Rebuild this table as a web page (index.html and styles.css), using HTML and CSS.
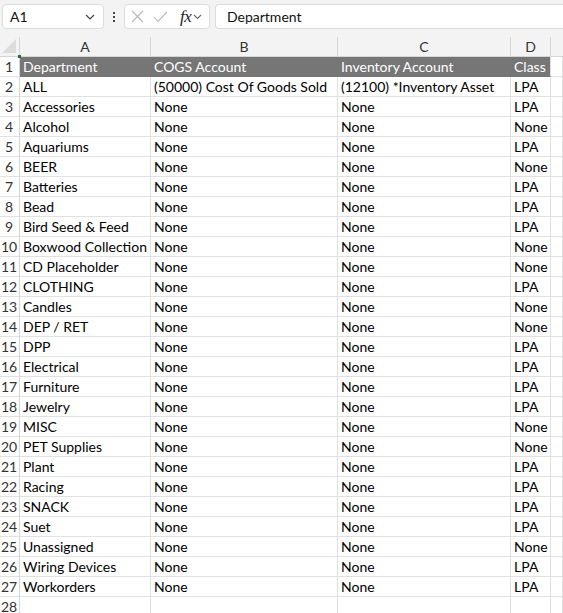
FILE: index.html
```html
<!DOCTYPE html>
<html>
<head>
<meta charset="utf-8">
<link rel="stylesheet" href="styles.css">
</head>
<body>
<div class="toolbar">
  <div class="namebox">
    <span class="nb-text">A1</span>
    <svg class="chev" width="10" height="6" viewBox="0 0 10 6"><path d="M1 1 L5 5 L9 1" fill="none" stroke="#444" stroke-width="1.2"/></svg>
  </div>
  <div class="dots"><i></i><i></i><i></i></div>
  <div class="fxgroup">
    <svg width="13" height="13" viewBox="0 0 13 13"><path d="M1 1 L12 12 M12 1 L1 12" stroke="#b8b8b8" stroke-width="1.1" fill="none"/></svg>
    <svg width="15" height="12" viewBox="0 0 15 12"><path d="M1 6 L5 10.5 L14 1" stroke="#b8b8b8" stroke-width="1.1" fill="none"/></svg>
    <span class="fx">fx</span>
    <svg class="chev2" width="9" height="6" viewBox="0 0 9 6"><path d="M1 1 L4.5 4.5 L8 1" fill="none" stroke="#666" stroke-width="1.1"/></svg>
  </div>
  <div class="formula">Department</div>
</div>
<div class="sheet">
  <div class="corner"><span class="tri"></span><span class="sel-dot"></span></div>
  <div class="colhdr">A</div><div class="colhdr">B</div><div class="colhdr">C</div><div class="colhdr">D</div><div class="colhdr last"></div>

  <div class="rowhdr">1</div><div class="cell head">Department</div><div class="cell head">COGS Account</div><div class="cell head">Inventory Account</div><div class="cell head endhead">Class</div><div class="cell"></div>
  <div class="rowhdr">2</div><div class="cell">ALL</div><div class="cell">(50000) Cost Of Goods Sold</div><div class="cell">(12100) *Inventory Asset</div><div class="cell">LPA</div><div class="cell"></div>
  <div class="rowhdr">3</div><div class="cell">Accessories</div><div class="cell">None</div><div class="cell">None</div><div class="cell">LPA</div><div class="cell"></div>
  <div class="rowhdr">4</div><div class="cell">Alcohol</div><div class="cell">None</div><div class="cell">None</div><div class="cell">None</div><div class="cell"></div>
  <div class="rowhdr">5</div><div class="cell">Aquariums</div><div class="cell">None</div><div class="cell">None</div><div class="cell">LPA</div><div class="cell"></div>
  <div class="rowhdr">6</div><div class="cell">BEER</div><div class="cell">None</div><div class="cell">None</div><div class="cell">None</div><div class="cell"></div>
  <div class="rowhdr">7</div><div class="cell">Batteries</div><div class="cell">None</div><div class="cell">None</div><div class="cell">LPA</div><div class="cell"></div>
  <div class="rowhdr">8</div><div class="cell">Bead</div><div class="cell">None</div><div class="cell">None</div><div class="cell">LPA</div><div class="cell"></div>
  <div class="rowhdr">9</div><div class="cell">Bird Seed &amp; Feed</div><div class="cell">None</div><div class="cell">None</div><div class="cell">LPA</div><div class="cell"></div>
  <div class="rowhdr">10</div><div class="cell">Boxwood Collection</div><div class="cell">None</div><div class="cell">None</div><div class="cell">None</div><div class="cell"></div>
  <div class="rowhdr">11</div><div class="cell">CD Placeholder</div><div class="cell">None</div><div class="cell">None</div><div class="cell">None</div><div class="cell"></div>
  <div class="rowhdr">12</div><div class="cell">CLOTHING</div><div class="cell">None</div><div class="cell">None</div><div class="cell">LPA</div><div class="cell"></div>
  <div class="rowhdr">13</div><div class="cell">Candles</div><div class="cell">None</div><div class="cell">None</div><div class="cell">None</div><div class="cell"></div>
  <div class="rowhdr">14</div><div class="cell">DEP / RET</div><div class="cell">None</div><div class="cell">None</div><div class="cell">None</div><div class="cell"></div>
  <div class="rowhdr">15</div><div class="cell">DPP</div><div class="cell">None</div><div class="cell">None</div><div class="cell">LPA</div><div class="cell"></div>
  <div class="rowhdr">16</div><div class="cell">Electrical</div><div class="cell">None</div><div class="cell">None</div><div class="cell">LPA</div><div class="cell"></div>
  <div class="rowhdr">17</div><div class="cell">Furniture</div><div class="cell">None</div><div class="cell">None</div><div class="cell">LPA</div><div class="cell"></div>
  <div class="rowhdr">18</div><div class="cell">Jewelry</div><div class="cell">None</div><div class="cell">None</div><div class="cell">LPA</div><div class="cell"></div>
  <div class="rowhdr">19</div><div class="cell">MISC</div><div class="cell">None</div><div class="cell">None</div><div class="cell">None</div><div class="cell"></div>
  <div class="rowhdr">20</div><div class="cell">PET Supplies</div><div class="cell">None</div><div class="cell">None</div><div class="cell">None</div><div class="cell"></div>
  <div class="rowhdr">21</div><div class="cell">Plant</div><div class="cell">None</div><div class="cell">None</div><div class="cell">LPA</div><div class="cell"></div>
  <div class="rowhdr">22</div><div class="cell">Racing</div><div class="cell">None</div><div class="cell">None</div><div class="cell">LPA</div><div class="cell"></div>
  <div class="rowhdr">23</div><div class="cell">SNACK</div><div class="cell">None</div><div class="cell">None</div><div class="cell">LPA</div><div class="cell"></div>
  <div class="rowhdr">24</div><div class="cell">Suet</div><div class="cell">None</div><div class="cell">None</div><div class="cell">LPA</div><div class="cell"></div>
  <div class="rowhdr">25</div><div class="cell">Unassigned</div><div class="cell">None</div><div class="cell">None</div><div class="cell">None</div><div class="cell"></div>
  <div class="rowhdr">26</div><div class="cell">Wiring Devices</div><div class="cell">None</div><div class="cell">None</div><div class="cell">LPA</div><div class="cell"></div>
  <div class="rowhdr">27</div><div class="cell">Workorders</div><div class="cell">None</div><div class="cell">None</div><div class="cell">LPA</div><div class="cell"></div>
  <div class="rowhdr">28</div><div class="cell"></div><div class="cell"></div><div class="cell"></div><div class="cell"></div><div class="cell"></div>
</div>
</body>
</html>
```
FILE: styles.css
```css
* { box-sizing: border-box; }
html, body { margin: 0; padding: 0; }
body {
  width: 563px;
  height: 613px;
  overflow: hidden;
  background: #ffffff;
  font-family: Lato, "Open Sans", sans-serif;
  font-size: 14px;
  color: #000;
}
.toolbar {
  height: 37px;
  background: #f3f3f3;
  display: flex;
  align-items: flex-start;
  padding: 4px 0 0 2px;
}
.namebox {
  width: 102px;
  height: 25px;
  background: #fff;
  border: 1px solid #dcdcdc;
  border-radius: 4px;
  display: flex;
  align-items: center;
  justify-content: space-between;
  padding: 0 8px 0 7px;
}
.nb-text { font-size: 14px; color: #111; }
.dots {
  width: 20px;
  height: 25px;
  display: flex;
  flex-direction: column;
  align-items: center;
  justify-content: center;
  gap: 2px;
}
.dots i {
  display: block;
  width: 2px;
  height: 2px;
  background: #444;
}
.fxgroup {
  width: 86px;
  height: 25px;
  background: #fff;
  border: 1px solid #dcdcdc;
  border-radius: 4px;
  display: flex;
  align-items: center;
  padding: 0 4px 0 6px;
  gap: 9px;
}
.fx {
  font-family: "Liberation Serif", "DejaVu Serif", serif;
  font-style: italic;
  font-size: 17px;
  color: #222;
  margin-left: 3px;
  letter-spacing: -0.5px;
}
.chev2 { margin-left: -7px; }
.formula {
  margin-left: 5px;
  flex: 1;
  height: 25px;
  background: #fff;
  border: 1px solid #dcdcdc;
  border-right: none;
  border-radius: 4px 0 0 4px;
  padding-left: 11px;
  line-height: 23px;
  font-size: 14px;
  color: #111;
}
.sheet {
  display: grid;
  grid-template-columns: 20px 131px 187px 173px 40px 1fr;
  grid-auto-rows: 20px;
}
.corner {
  position: relative;
  background: #f3f3f3;
  border-right: 1px solid #d6d6d6;
  border-bottom: 1px solid #d6d6d6;
}
.tri {
  position: absolute;
  right: 3px;
  bottom: 3px;
  width: 0;
  height: 0;
  border-left: 14px solid transparent;
  border-bottom: 14px solid #dcdcdc;
}
.sel-dot {
  position: absolute;
  right: -2px;
  bottom: -2px;
  width: 3px;
  height: 3px;
  background: #1e6b3c;
}
.colhdr {
  background: #f3f3f3;
  border-right: 1px solid #d6d6d6;
  border-bottom: 1px solid #d6d6d6;
  text-align: center;
  line-height: 19px;
  font-size: 14px;
  color: #333;
}
.colhdr.last { border-right: none; }
.rowhdr {
  background: #fff;
  border-right: 1px solid #d6d6d6;
  border-bottom: 1px solid #e1e1e1;
  text-align: center;
  line-height: 20px;
  font-size: 14px;
  color: #333;
  padding-right: 1px;
}
.cell {
  border-right: 1px solid #e1e1e1;
  border-bottom: 1px solid #e1e1e1;
  padding-left: 3px;
  line-height: 20px;
  white-space: nowrap;
  overflow: hidden;
}
.cell.head {
  background: #767676;
  color: #fff;
  border-right-color: #767676;
  border-bottom-color: #767676;
}
.cell.head.endhead { border-right-color: #e1e1e1; }
```
